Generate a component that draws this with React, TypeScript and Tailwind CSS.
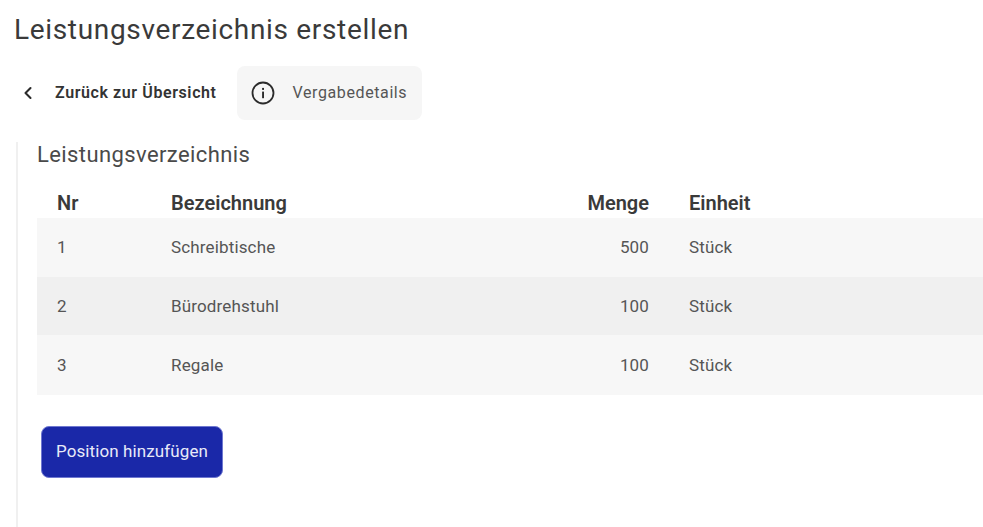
import React from 'react';
import { ChevronLeft } from 'lucide-react';

const rows = [
    { nr: 1, name: 'Schreibtische', menge: 500, einheit: 'Stück', bg: 'bg-[#f7f7f7]', h: 'h-[59px]' },
    { nr: 2, name: 'Bürodrehstuhl', menge: 100, einheit: 'Stück', bg: 'bg-[#f0f0f0] pt-[2px]', h: 'h-[58px]' },
    { nr: 3, name: 'Regale', menge: 100, einheit: 'Stück', bg: 'bg-[#f7f7f7] pt-[1px]', h: 'h-[60px]' },
];

const InfoIcon = () => (
    <svg width="26" height="26" viewBox="0 0 26 26" fill="none" className="text-[#2b2b2b] shrink-0">
        <circle cx="13" cy="13" r="10.5" stroke="currentColor" strokeWidth="1.8" />
        <rect x="12.1" y="11.6" width="1.9" height="6.6" fill="currentColor" />
        <rect x="12.1" y="7.9" width="1.9" height="2" fill="currentColor" />
    </svg>
);

export default function App() {
    return (
        <div className="w-[983px] h-[527px] overflow-hidden bg-white font-['Roboto',sans-serif]">
            <h1 className="pt-[12px] pl-[14px] text-[28px] leading-[35px] font-normal text-[#3a3a3a] tracking-[0.67px]">
                Leistungsverzeichnis erstellen
            </h1>

            <div className="flex items-center mt-[19px] h-[54px]">
                <button className="flex items-center text-[#2b2b2b]">
                    <ChevronLeft className="w-[20px] h-[20px] ml-[18px]" strokeWidth={2.5} />
                    <span className="ml-[17px] text-[16px] font-semibold text-[#333333] tracking-[0.6px]">Zurück zur Übersicht</span>
                </button>
                <div className="flex items-center ml-[20px] w-[185px] h-[54px] rounded-lg bg-[#f6f6f6] pl-[13px]">
                    <InfoIcon />
                    <span className="ml-[17px] text-[16px] text-[#555555] tracking-[0.6px]">Vergabedetails</span>
                </div>
            </div>

            <div className="ml-[16px] mt-[22px] h-[385px] border-l-[2px] border-[#f0f0f0] pl-[19px]">
                <h2 className="text-[22px] leading-[26px] font-normal text-[#4a4a4a] tracking-[0.4px]">Leistungsverzeichnis</h2>

                <div className="grid grid-cols-[134px_398px_80px_1fr] items-center h-[30px] mt-[20px] text-[20px] font-semibold text-[#3a3a3a]">
                    <div className="pl-[20px]">Nr</div>
                    <div>Bezeichnung</div>
                    <div className="text-right">Menge</div>
                    <div className="pl-[40px]">Einheit</div>
                </div>

                {rows.map((r) => (
                    <div key={r.nr} className={`grid grid-cols-[134px_398px_80px_1fr] items-center text-[17px] tracking-[0.15px] text-[#555555] ${r.bg} ${r.h}`}>
                        <div className="pl-[20px]">{r.nr}</div>
                        <div>{r.name}</div>
                        <div className="text-right">{r.menge}</div>
                        <div className="pl-[40px]">{r.einheit}</div>
                    </div>
                ))}

                <button className="mt-[31px] ml-[4px] w-[182px] h-[52px] rounded-lg bg-[#1a28a8] border border-[#6f78d0] text-[17px] tracking-[0.1px] text-[#e8eaf8]">
                    Position hinzufügen
                </button>
            </div>
        </div>
    );
}
